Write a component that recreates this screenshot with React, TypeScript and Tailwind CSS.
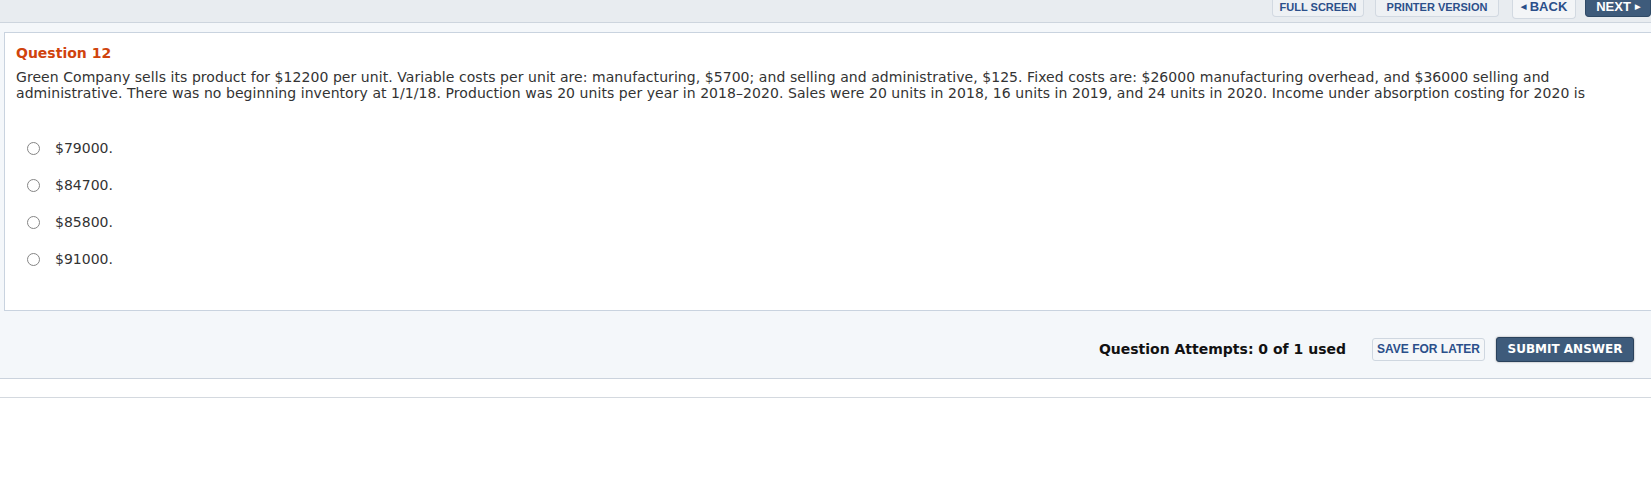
import React from "react";

const options = ["$79000.", "$84700.", "$85800.", "$91000."];

function TopButton({ label, className }: { label: React.ReactNode; className: string }) {
  return (
    <div
      className={`flex h-[17px] items-start justify-center rounded-b-[4px] border border-t-0 pt-[1px] font-['Liberation_Sans',sans-serif] font-bold leading-[12px] ${className}`}
    >
      {label}
    </div>
  );
}

export default function App() {
  return (
    <div className="min-h-screen bg-white font-['DejaVu_Sans',sans-serif] text-[#333]">
      {/* top toolbar */}
      <div className="flex h-[23px] items-start justify-end border-b border-[#cdd5de] bg-[#e8ecf0]">
        <TopButton
          label="FULL SCREEN"
          className="w-[92px] border-[#d2d9e1] bg-[#eef1f4] text-[11px] text-[#2b4f8a]"
        />
        <TopButton
          label="PRINTER VERSION"
          className="ml-[11px] w-[124px] border-[#d2d9e1] bg-[#eef1f4] text-[11px] text-[#2b4f8a]"
        />
        <TopButton
          label={
            <span className="flex items-center gap-[4px]">
              <span className="text-[7px]">◀</span>BACK
            </span>
          }
          className="ml-[13px] h-[19px] w-[64px] border-[#d2d9e1] bg-[#f3f5f7] text-[13px] text-[#2b4f8a]"
        />
        <TopButton
          label={
            <span className="flex items-center gap-[4px]">
              NEXT<span className="text-[7px]">▶</span>
            </span>
          }
          className="ml-[9px] w-[66px] border-[#2f4a66] bg-[#3e5b7b] text-[13px] text-white"
        />
      </div>

      <div className="bg-[#f4f7fa] pt-[9px]">
        {/* question card */}
        <div className="ml-[4px] h-[279px] border border-r-0 border-[#c9d3df] bg-white pl-[11px] pt-[11px]">
          <div className="text-[14px] font-bold leading-[18px] text-[#d0430d]">Question 12</div>
          <p className="mt-[7px] pr-[20px] text-[14px] leading-[16px] tracking-[0.06px] text-[#333]">
            Green Company sells its product for $12200 per unit. Variable costs per unit are: manufacturing, $5700; and
            selling and administrative, $125. Fixed costs are: $26000 manufacturing overhead, and $36000 selling and
            administrative. There was no beginning inventory at 1/1/18. Production was 20 units per year in 2018–2020.
            Sales were 20 units in 2018, 16 units in 2019, and 24 units in 2020. Income under absorption costing for 2020
            is
          </p>
          <div className="mt-[29px] flex flex-col pl-[11px]">
            {options.map((o) => (
              <label key={o} className="flex h-[37px] items-center">
                <span className="h-[13px] w-[13px] rounded-full border border-[#858585] bg-white" />
                <span className="ml-[15px] text-[14px] text-[#333]">{o}</span>
              </label>
            ))}
          </div>
        </div>

        {/* footer */}
        <div className="flex h-[68px] items-center justify-end border-b border-[#cbd3dd] pr-[17px] pt-[9px]">
          <span className="text-[14px] font-bold text-[#111]">Question Attempts: 0 of 1 used</span>
          <button className="ml-[26px] h-[23px] w-[113px] rounded-[3px] border border-[#cfd7e0] bg-[#f5f7f9] font-['Liberation_Sans',sans-serif] text-[12px] font-bold text-[#2b4f8a]">
            SAVE FOR LATER
          </button>
          <button className="ml-[11px] h-[25px] w-[138px] rounded-[3px] border border-[#2a425c] bg-[#3e5b7b] font-['DejaVu_Sans',sans-serif] text-[12px] font-bold text-white shadow-[0_0_2px_rgba(0,0,0,0.4)]">
            SUBMIT ANSWER
          </button>
        </div>
      </div>

      <div className="h-[19px] border-b border-[#d4d9df]" />
    </div>
  );
}
